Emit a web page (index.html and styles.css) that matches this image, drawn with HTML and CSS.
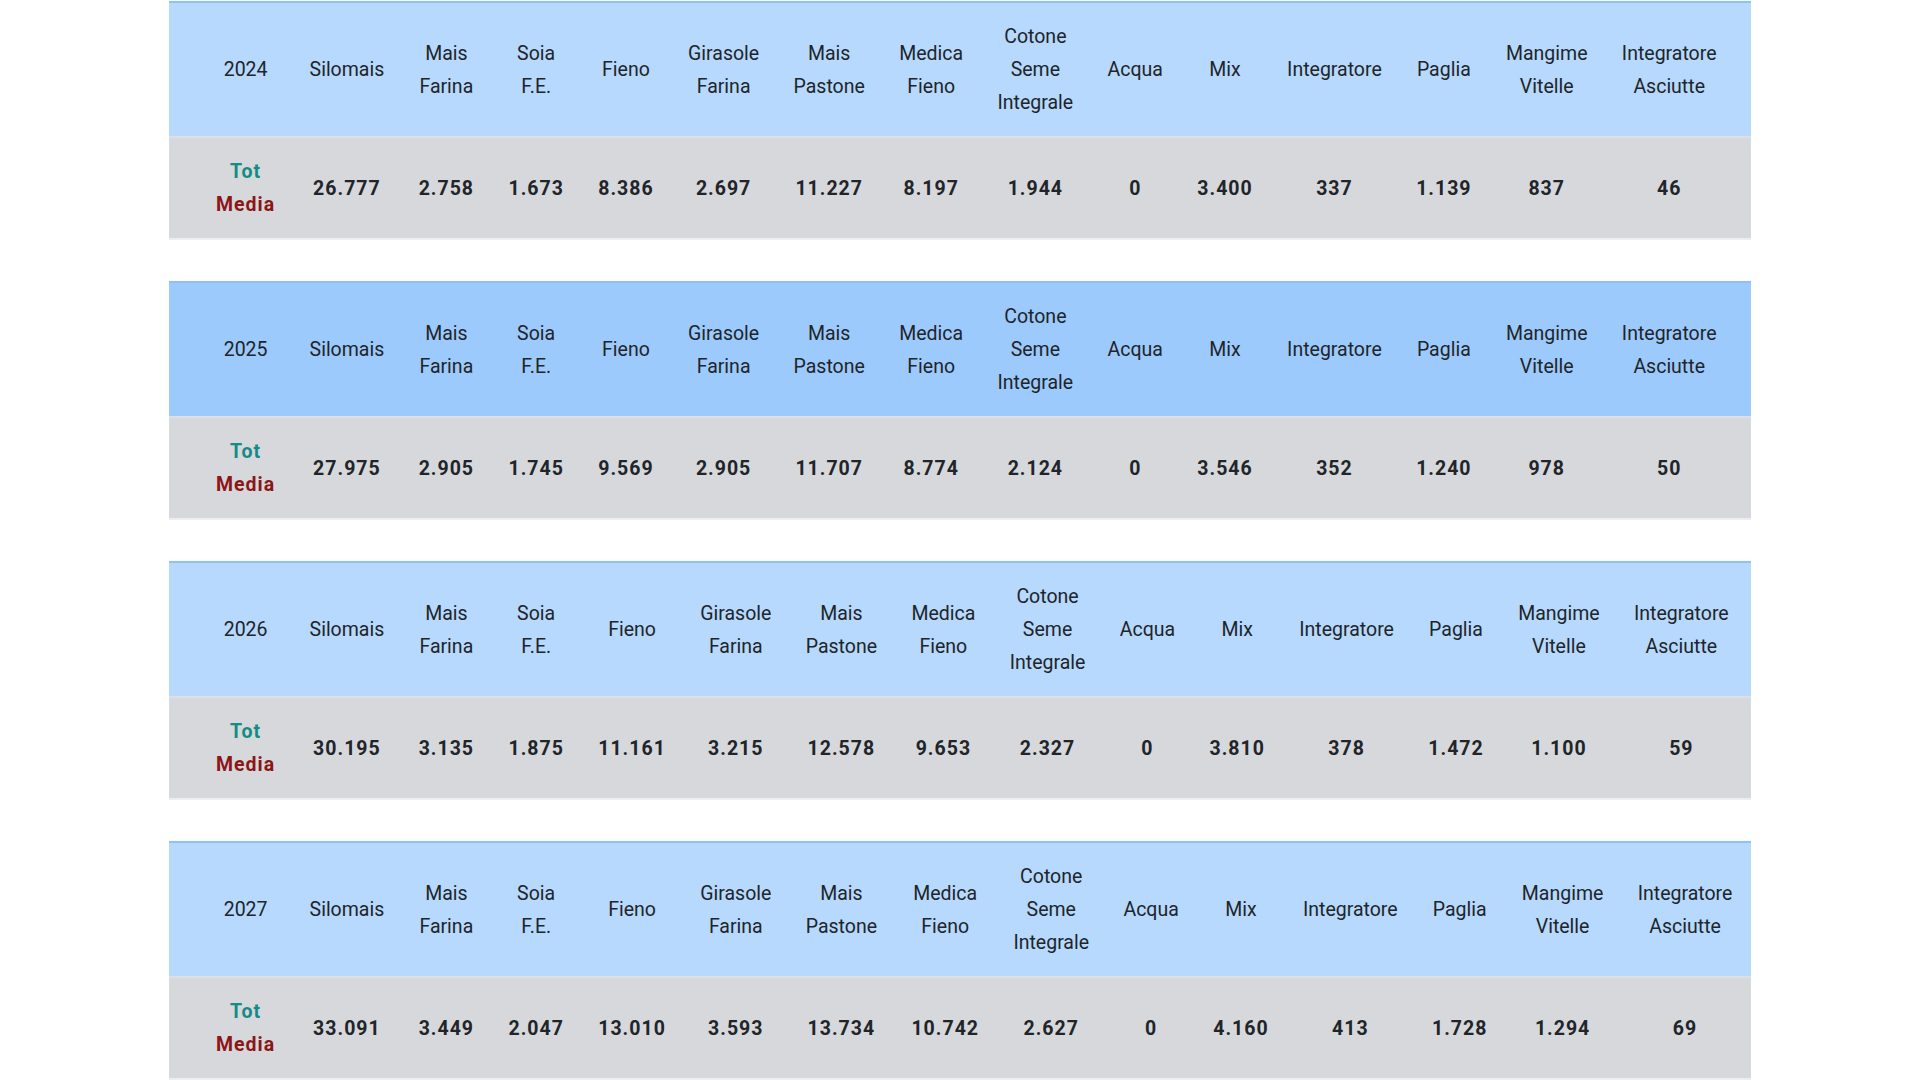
FILE: index.html
```html
<!DOCTYPE html>
<html lang="it">
<head>
<meta charset="utf-8">
<title>Consumi</title>
<link rel="stylesheet" href="styles.css">
</head>
<body>
<main class="page">

<table class="feed">
  <thead class="head">
    <tr>
      <th>2024</th><th>Silomais</th><th>Mais<br>Farina</th><th>Soia<br>F.E.</th><th>Fieno</th><th>Girasole<br>Farina</th><th>Mais<br>Pastone</th><th>Medica<br>Fieno</th><th>Cotone<br>Seme<br>Integrale</th><th>Acqua</th><th>Mix</th><th>Integratore</th><th>Paglia</th><th>Mangime<br>Vitelle</th><th>Integratore<br>Asciutte</th><th class="fill"></th>
    </tr>
  </thead>
  <tbody>
    <tr>
      <td class="label"><span class="tot">Tot</span><br><span class="media">Media</span></td>
      <td>26.777</td><td>2.758</td><td>1.673</td><td>8.386</td><td>2.697</td><td>11.227</td><td>8.197</td><td>1.944</td><td>0</td><td>3.400</td><td>337</td><td>1.139</td><td>837</td><td>46</td><td class="fill"></td>
    </tr>
  </tbody>
</table>

<table class="feed">
  <thead class="head head-active">
    <tr>
      <th>2025</th><th>Silomais</th><th>Mais<br>Farina</th><th>Soia<br>F.E.</th><th>Fieno</th><th>Girasole<br>Farina</th><th>Mais<br>Pastone</th><th>Medica<br>Fieno</th><th>Cotone<br>Seme<br>Integrale</th><th>Acqua</th><th>Mix</th><th>Integratore</th><th>Paglia</th><th>Mangime<br>Vitelle</th><th>Integratore<br>Asciutte</th><th class="fill"></th>
    </tr>
  </thead>
  <tbody>
    <tr>
      <td class="label"><span class="tot">Tot</span><br><span class="media">Media</span></td>
      <td>27.975</td><td>2.905</td><td>1.745</td><td>9.569</td><td>2.905</td><td>11.707</td><td>8.774</td><td>2.124</td><td>0</td><td>3.546</td><td>352</td><td>1.240</td><td>978</td><td>50</td><td class="fill"></td>
    </tr>
  </tbody>
</table>

<table class="feed">
  <thead class="head">
    <tr>
      <th>2026</th><th>Silomais</th><th>Mais<br>Farina</th><th>Soia<br>F.E.</th><th>Fieno</th><th>Girasole<br>Farina</th><th>Mais<br>Pastone</th><th>Medica<br>Fieno</th><th>Cotone<br>Seme<br>Integrale</th><th>Acqua</th><th>Mix</th><th>Integratore</th><th>Paglia</th><th>Mangime<br>Vitelle</th><th>Integratore<br>Asciutte</th><th class="fill"></th>
    </tr>
  </thead>
  <tbody>
    <tr>
      <td class="label"><span class="tot">Tot</span><br><span class="media">Media</span></td>
      <td>30.195</td><td>3.135</td><td>1.875</td><td>11.161</td><td>3.215</td><td>12.578</td><td>9.653</td><td>2.327</td><td>0</td><td>3.810</td><td>378</td><td>1.472</td><td>1.100</td><td>59</td><td class="fill"></td>
    </tr>
  </tbody>
</table>

<table class="feed">
  <thead class="head">
    <tr>
      <th>2027</th><th>Silomais</th><th>Mais<br>Farina</th><th>Soia<br>F.E.</th><th>Fieno</th><th>Girasole<br>Farina</th><th>Mais<br>Pastone</th><th>Medica<br>Fieno</th><th>Cotone<br>Seme<br>Integrale</th><th>Acqua</th><th>Mix</th><th>Integratore</th><th>Paglia</th><th>Mangime<br>Vitelle</th><th>Integratore<br>Asciutte</th><th class="fill"></th>
    </tr>
  </thead>
  <tbody>
    <tr>
      <td class="label"><span class="tot">Tot</span><br><span class="media">Media</span></td>
      <td>33.091</td><td>3.449</td><td>2.047</td><td>13.010</td><td>3.593</td><td>13.734</td><td>10.742</td><td>2.627</td><td>0</td><td>4.160</td><td>413</td><td>1.728</td><td>1.294</td><td>69</td><td class="fill"></td>
    </tr>
  </tbody>
</table>

</main>
</body>
</html>
```
FILE: styles.css
```css
html, body {
  margin: 0;
  padding: 0;
  background: #ffffff;
}

body {
  font-family: Roboto, "Noto Sans", "Liberation Sans", sans-serif;
  color: #212529;
}

.page {
  width: 1582px;
  margin: 0 auto;
  padding-top: 1px;
}

.feed {
  width: 100%;
  border-collapse: collapse;
  margin-bottom: 41px;
  font-size: 19.5px;
  line-height: 33px;
}

.feed th,
.feed td {
  padding: 17px 17.2px;
  text-align: center;
  vertical-align: middle;
  white-space: nowrap;
}

.feed th:first-child,
.feed td:first-child {
  padding-left: 47px;
}

.feed .fill {
  width: 100%;
  padding: 0;
}

.head tr {
  background: #b6d9fd;
  border-top: 2px solid #8ec1f6;
}

.head th {
  font-weight: 400;
  border-bottom: 2px solid #dcdfe3;
}

.head-active tr {
  background: #9ccafc;
}

.feed tbody tr {
  background: #d6d8dc;
  border-bottom: 2px solid #eceef1;
}

.feed tbody td {
  font-weight: 700;
  letter-spacing: 1px;
}

.tot {
  color: #158b84;
}

.media {
  color: #8c1616;
}
```
